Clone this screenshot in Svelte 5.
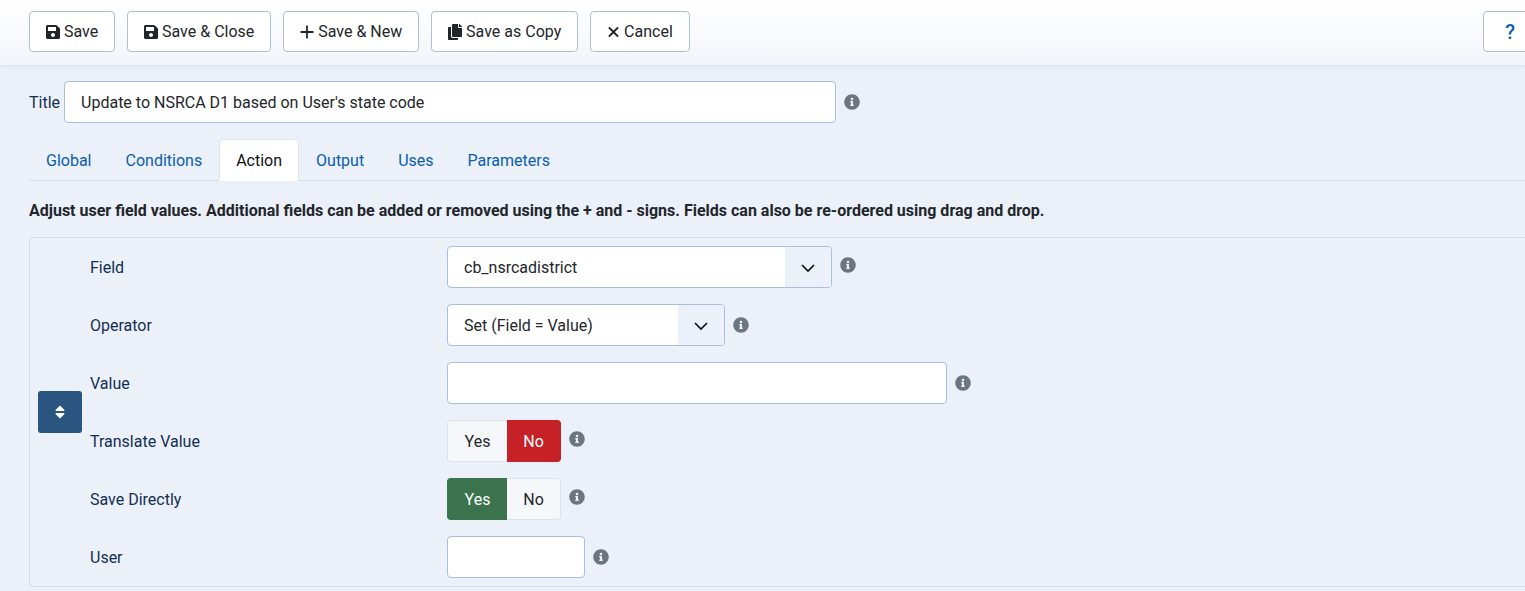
<script lang="ts">
  const icons = {
    save: { box: '0 0 448 512', w: 14, d: 'M433.941 129.941l-83.882-83.882A48 48 0 0 0 316.118 32H48C21.49 32 0 53.49 0 80v352c0 26.51 21.49 48 48 48h352c26.51 0 48-21.49 48-48V163.882a48 48 0 0 0-14.059-33.941zM224 416c-35.346 0-64-28.654-64-64 0-35.346 28.654-64 64-64s64 28.654 64 64c0 35.346-28.654 64-64 64zm96-304.52V212c0 6.627-5.373 12-12 12H76c-6.627 0-12-5.373-12-12V108c0-6.627 5.373-12 12-12h228.52c3.183 0 6.235 1.264 8.485 3.515l3.48 3.48A11.996 11.996 0 0 1 320 111.48z' },
    plus: { box: '0 0 14 16', w: 14, d: 'M6.1 1.5h1.8v5.6h5.6v1.8H7.9v5.6H6.1V8.9H.5V7.1h5.6z' },
    copy: { box: '0 0 448 512', w: 14, d: 'M320 448v40c0 13.255-10.745 24-24 24H24c-13.255 0-24-10.745-24-24V120c0-13.255 10.745-24 24-24h72v296c0 30.879 25.121 56 56 56h168zm0-344V0H152c-13.255 0-24 10.745-24 24v368c0 13.255 10.745 24 24 24h272c13.255 0 24-10.745 24-24V128H344c-13.2 0-24-10.8-24-24zm120.971-31.029L375.029 7.029A24 24 0 0 0 358.059 0H352v96h96v-6.059a24 24 0 0 0-7.029-16.97z' },
    times: { box: '0 0 12 16', w: 13, d: 'M2.1 2.7L6 6.6l3.9-3.9 1.4 1.4L7.4 8l3.9 3.9-1.4 1.4L6 9.4l-3.9 3.9-1.4-1.4L4.6 8 .7 4.1z' }
  };

  const info = 'M256 8C119.043 8 8 119.083 8 256c0 136.997 111.043 248 248 248s248-111.003 248-248C504 119.083 392.957 8 256 8zm0 110c23.196 0 42 18.804 42 42s-18.804 42-42 42-42-18.804-42-42 18.804-42 42-42zm56 254c0 6.627-5.373 12-12 12h-88c-6.627 0-12-5.373-12-12v-24c0-6.627 5.373-12 12-12h12v-64h-12c-6.627 0-12-5.373-12-12v-24c0-6.627 5.373-12 12-12h64c6.627 0 12 5.373 12 12v100h12c6.627 0 12 5.373 12 12v24z';

  const buttons = [
    { label: 'Save', icon: icons.save },
    { label: 'Save & Close', icon: icons.save },
    { label: 'Save & New', icon: icons.plus },
    { label: 'Save as Copy', icon: icons.copy },
    { label: 'Cancel', icon: icons.times }
  ];

  const tabs = ['Global', 'Conditions', 'Action', 'Output', 'Uses', 'Parameters'];
</script>

{#snippet tip(cls = '')}
  <svg class="tip {cls}" viewBox="0 0 512 512" aria-hidden="true"><path d={info} /></svg>
{/snippet}

{#snippet chevron()}
  <span class="arrow">
    <svg viewBox="0 0 16 16" aria-hidden="true"><path d="M2 6l6 6 6-6" /></svg>
  </span>
{/snippet}

<header class="toolbar">
  {#each buttons as b}
    <button class="btn">
      <svg class="ico" style="width: {b.icon.w}px" viewBox={b.icon.box} aria-hidden="true"><path d={b.icon.d} /></svg>
      {b.label}
    </button>
  {/each}
  <button class="btn help">?</button>
</header>

<main>
  <div class="title-row">
    <span class="title-label">Title</span>
    <div class="input title">Update to NSRCA D1 based on User's state code</div>
    {@render tip()}
  </div>

  <nav class="tabs">
    {#each tabs as t}
      <span class="tab" class:active={t === 'Action'}>{t}</span>
    {/each}
  </nav>

  <p class="desc">Adjust user field values. Additional fields can be added or removed using the + and - signs. Fields can also be re-ordered using drag and drop.</p>

  <section class="panel">
    <div class="handle-col">
      <span class="handle">
        <svg viewBox="0 0 320 512" aria-hidden="true"><path d="M41 288h238c21.4 0 32.1 25.9 17 41L177 448c-9.4 9.4-24.6 9.4-33.9 0L24 329c-15.1-15.1-4.4-41 17-41zm255-105L177 64c-9.4-9.4-24.6-9.4-33.9 0L24 183c-15.1 15.1-4.4 41 17 41h238c21.4 0 32.1-25.9 17-41z" /></svg>
      </span>
    </div>
    <div class="rows">
      <div class="row">
        <span class="label">Field</span>
        <div class="input select w-field">cb_nsrcadistrict{@render chevron()}</div>
        {@render tip('up')}
      </div>
      <div class="row">
        <span class="label">Operator</span>
        <div class="input select w-op">Set (Field = Value){@render chevron()}</div>
        {@render tip()}
      </div>
      <div class="row">
        <span class="label">Value</span>
        <div class="input w-value"></div>
        {@render tip()}
      </div>
      <div class="row">
        <span class="label">Translate Value</span>
        <div class="switch">
          <span class="opt yes">Yes</span>
          <span class="opt no on-red">No</span>
        </div>
        {@render tip('up')}
      </div>
      <div class="row">
        <span class="label">Save Directly</span>
        <div class="switch">
          <span class="opt yes on-green">Yes</span>
          <span class="opt no">No</span>
        </div>
        {@render tip('up')}
      </div>
      <div class="row">
        <span class="label">User</span>
        <div class="input w-user"></div>
        {@render tip()}
      </div>
    </div>
  </section>
</main>

<style>
  :global(body) {
    background: #ebf0f9;
    font-family: Roboto, "Liberation Sans", sans-serif;
    font-size: 16px;
    color: #22262a;
    overflow: hidden;
  }

  .toolbar {
    display: flex;
    align-items: center;
    gap: 12px;
    height: 65px;
    padding: 0 0 2px 29px;
    box-sizing: border-box;
    overflow: hidden;
    background: linear-gradient(#fff, #f2f5fa);
    box-shadow: 0 1px 4px rgba(120, 140, 180, 0.18);
  }

  .btn {
    display: flex;
    align-items: center;
    justify-content: center;
    gap: 4px;
    height: 41px;
    padding: 0 15.95px;
    box-sizing: border-box;
    background: #fff;
    border: 1px solid #b2bfcd;
    border-radius: 4px;
    font: inherit;
    color: #22262a;
  }

  .ico {
    height: 16px;
    fill: #22262a;
  }

  .help {
    flex: none;
    width: 54px;
    margin-left: auto;
    margin-right: -12px;
    padding: 0;
    color: #0a5eae;
    font-weight: 500;
    font-size: 20px;
  }

  main {
    padding: 16px 0 0 29px;
  }

  .title-row {
    display: flex;
    align-items: center;
    gap: 4px;
  }

  .title-label {
    color: #132f53;
  }

  .input {
    display: flex;
    align-items: center;
    height: 42px;
    box-sizing: border-box;
    padding: 0 16px;
    background: #fff;
    border: 1px solid #a9bfdc;
    border-radius: 4px;
    color: #22262a;
  }

  .title {
    width: 772px;
    margin-right: 4px;
  }

  .tip {
    flex: none;
    width: 16px;
    height: 16px;
    fill: #6d757e;
  }

  .tip.up {
    margin-top: -4px;
  }

  .tabs {
    display: flex;
    height: 42px;
    margin-top: 16px;
    box-sizing: border-box;
    border-bottom: 1px solid #d3dbe6;
  }

  .tab {
    display: flex;
    align-items: center;
    height: 42px;
    box-sizing: border-box;
    padding: 0 16px;
    color: #0a5eae;
    border: 1px solid transparent;
    border-radius: 4px 4px 0 0;
  }

  .tab.active {
    color: #111;
    background: #fff;
    border-color: #dfe4ec;
    border-bottom: none;
  }

  .desc {
    margin: 20px 0 17px;
    font-weight: 700;
    line-height: 19px;
    color: #22262a;
  }

  .panel {
    display: flex;
    align-items: center;
    padding: 8px 0;
    border: 1px solid #d3dbe6;
    border-right: none;
    border-radius: 4px 0 0 4px;
  }

  .handle-col {
    padding-left: 8px;
    width: 60px;
    box-sizing: border-box;
  }

  .handle {
    display: flex;
    align-items: center;
    justify-content: center;
    width: 44px;
    height: 42px;
    background: #2a5580;
    border-radius: 3px;
  }

  .handle svg {
    width: 10px;
    height: 16px;
    fill: #fff;
  }

  .rows {
    display: flex;
    flex-direction: column;
    gap: 16px;
  }

  .row {
    display: flex;
    align-items: center;
    height: 42px;
  }

  .label {
    width: 357px;
    color: #132f53;
  }

  .row .tip {
    margin-left: 8px;
  }

  .select {
    position: relative;
    padding-right: 47px;
  }

  .arrow {
    position: absolute;
    top: 0;
    right: 0;
    bottom: 0;
    width: 46px;
    display: flex;
    align-items: center;
    justify-content: center;
    background: #ebf0f9;
    border-radius: 0 3px 3px 0;
  }

  .arrow svg {
    width: 16px;
    height: 16px;
    fill: none;
    stroke: #111;
    stroke-width: 1.7;
  }

  .w-field { width: 385px; }
  .w-op { width: 278px; }
  .w-value { width: 500px; }
  .w-user { width: 138px; }

  .switch {
    display: flex;
    width: 114px;
    height: 42px;
  }

  .opt {
    display: flex;
    align-items: center;
    justify-content: center;
    box-sizing: border-box;
    background: #f5f7fb;
    border: 1px solid #dce2ea;
    color: #22262a;
  }

  .yes {
    width: 60px;
    border-radius: 4px 0 0 4px;
    border-right: none;
  }

  .no {
    width: 54px;
    border-radius: 0 4px 4px 0;
    border-left: none;
  }

  .on-red {
    background: #c52127;
    border-color: #c52127;
    color: #fff;
  }

  .on-green {
    background: #3a734c;
    border-color: #3a734c;
    color: #fff;
  }
</style>
